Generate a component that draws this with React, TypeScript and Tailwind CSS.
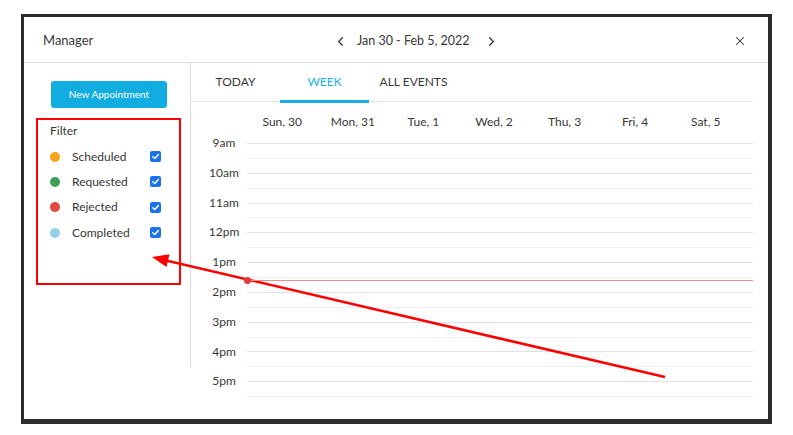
import { ChevronLeft, ChevronRight, X } from "lucide-react";

const filters = [
  { label: "Scheduled", color: "bg-[#f7a21b]" },
  { label: "Requested", color: "bg-[#3d9f55]" },
  { label: "Rejected", color: "bg-[#e0493f]" },
  { label: "Completed", color: "bg-[#94cfea]" },
];

const days = ["Sun, 30", "Mon, 31", "Tue, 1", "Wed, 2", "Thu, 3", "Fri, 4", "Sat, 5"];
const hours = ["9am", "10am", "11am", "12pm", "1pm", "2pm", "3pm", "4pm", "5pm"];
const slots = Array.from({ length: 18 }, (_, i) => i);

function CheckBox() {
  return (
    <div className="flex h-[11px] w-[11px] items-center justify-center rounded-[2px] bg-[#1a73e8]">
      <svg width="9" height="9" viewBox="0 0 10 10" fill="none">
        <path d="M2 5.2 L4.2 7.3 L8.2 2.8" stroke="white" strokeWidth="1.6" strokeLinecap="round" strokeLinejoin="round" />
      </svg>
    </div>
  );
}

export default function App() {
  return (
    <div className="relative h-[435px] w-[793px] overflow-hidden bg-white pl-[21px] pt-[14px] font-['Lato','Open_Sans',sans-serif] text-[#383838]">
      <div className="flex h-[410px] w-[751px] flex-col border-b-[5px] border-l-[3px] border-r-[4px] border-t-[3px] border-[#2b2b2b] bg-white">
        {/* header */}
        <header className="flex h-[46px] shrink-0 items-center border-b border-[#dcdcdc] pt-[3px]">
          <div className="w-[309px] pl-[19px] text-[13px]">Manager</div>
          <div className="flex items-center text-[12.5px]">
            <ChevronLeft className="h-[15px] w-[15px]" strokeWidth={2} />
            <span className="ml-[9px]">Jan 30 - Feb 5, 2022</span>
            <ChevronRight className="ml-[14px] h-[15px] w-[15px]" strokeWidth={2} />
          </div>
          <div className="flex-1" />
          <X className="mr-[21px] h-[14px] w-[14px]" strokeWidth={1.8} />
        </header>

        <div className="flex flex-1">
          {/* sidebar */}
          <aside className="h-[304px] w-[167px] shrink-0 border-r border-[#dcdcdc] pt-[18px]">
            <button className="ml-[27px] flex h-[27px] w-[116px] items-center justify-center rounded-[3px] bg-[#12ade0] text-[10px] text-white">
              New Appointment
            </button>
            <div className="mt-[15px] pl-[26px] text-[12px] leading-[16px]">Filter</div>
            <div className="mt-[5px]">
              {filters.map((f) => (
                <div key={f.label} className="flex h-[25.3px] items-center pl-[26px]">
                  <span className={`h-[10px] w-[10px] rounded-full ${f.color}`} />
                  <span className="ml-[12px] w-[78px] text-[12px]">{f.label}</span>
                  <CheckBox />
                </div>
              ))}
            </div>
          </aside>

          {/* main */}
          <main className="flex-1 pr-[15px]">
            <div className="flex h-[39px] border-b border-[#e3e3e3]">
              <div className="flex w-[89px] items-center justify-center text-[12px]">TODAY</div>
              <div className="relative flex w-[89px] items-center justify-center text-[12px] text-[#22b3e4]">
                WEEK
                <div className="absolute -bottom-[2px] left-0 right-0 h-[3px] bg-[#1aaee0]" />
              </div>
              <div className="flex w-[89px] items-center justify-center text-[12px]">ALL EVENTS</div>
            </div>

            <div className="flex">
              <div className="w-[56px] shrink-0 pl-[10px] pt-[33px] text-center text-[12px] leading-[16px]">
                {hours.map((h) => (
                  <div key={h} className="h-[29.8px]">
                    {h}
                  </div>
                ))}
              </div>
              <div className="flex-1">
                <div className="grid h-[41px] grid-cols-7 pr-[12px] pt-[12px] text-[12px] leading-[16px]">
                  {days.map((d) => (
                    <div key={d} className="text-center">
                      {d}
                    </div>
                  ))}
                </div>
                <div className="relative">
                  {slots.map((i) => (
                    <div
                      key={i}
                      className={i % 2 === 0 ? "h-[14.9px] border-t border-[#e2e2e2]" : "h-[14.9px] border-t border-[#f1f1f1]"}
                    />
                  ))}
                  <div className="absolute left-0 right-0 top-[136.5px] z-10 h-px bg-[#f58a8a]" />
                  <div className="absolute -left-[3px] top-[133.5px] z-10 h-[7px] w-[7px] rounded-full bg-[#e53935]" />
                </div>
              </div>
            </div>
          </main>
        </div>
      </div>

      {/* annotation */}
      <div className="absolute left-[36px] top-[118px] h-[167px] w-[145px] border-2 border-[#ff0000]" />
      <svg className="absolute left-0 top-0" width="793" height="435" viewBox="0 0 793 435">
        <line x1="665" y1="377" x2="164" y2="260" stroke="#ff0000" strokeWidth="2.6" />
        <polygon points="152,257 169.5,254.3 166.5,267" fill="#ff0000" />
      </svg>
    </div>
  );
}
